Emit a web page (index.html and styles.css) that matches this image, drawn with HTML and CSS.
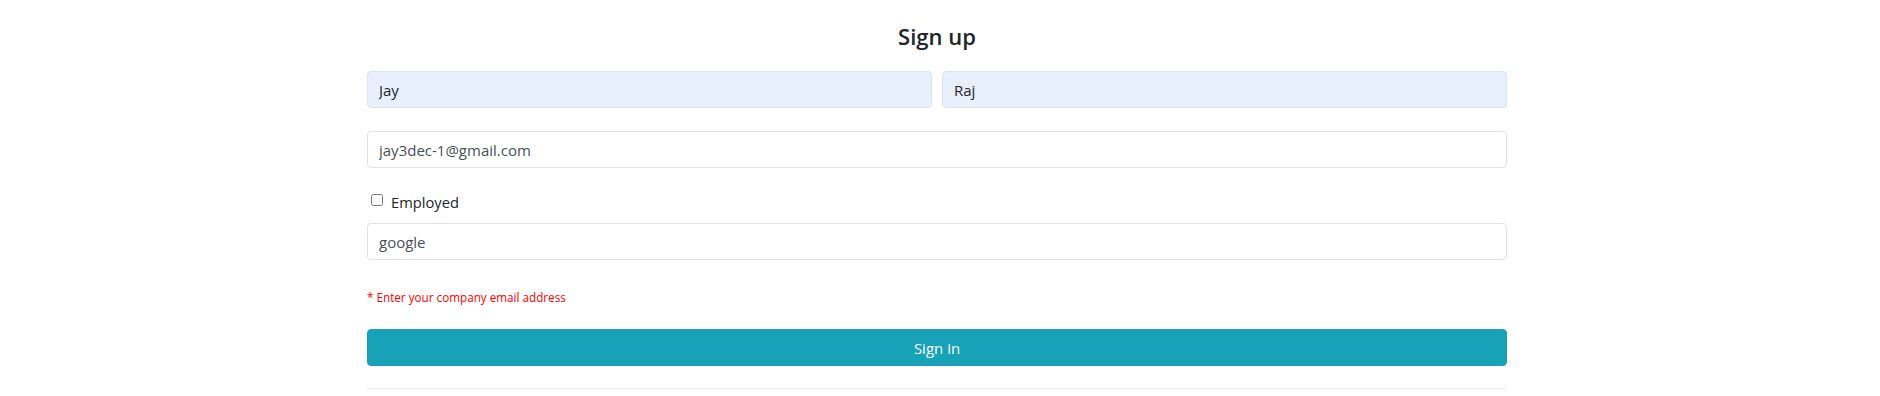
FILE: index.html
```html
<!DOCTYPE html>
<html lang="en">
<head>
<meta charset="utf-8">
<title>Sign up</title>
<link rel="stylesheet" href="styles.css">
</head>
<body>
<main class="container">
  <h2 class="title">Sign up</h2>
  <form class="form">
    <div class="row-2">
      <input class="field field-autofill" type="text" value="Jay">
      <input class="field field-autofill" type="text" value="Raj">
    </div>
    <input class="field field-email" type="email" value="jay3dec-1@gmail.com">
    <label class="check">
      <input class="check-box" type="checkbox">
      <span class="check-label">Employed</span>
    </label>
    <input class="field field-company" type="text" value="google">
    <p class="error">* Enter your company email address</p>
    <button class="btn" type="button">Sign in</button>
  </form>
  <hr class="rule">
</main>
</body>
</html>
```
FILE: styles.css
```css
html, body {
  margin: 0;
  padding: 0;
  background: #ffffff;
}
body {
  padding-right: 6px;
  font-family: "Open Sans", "Noto Sans", sans-serif;
  color: #212529;
}
.container {
  width: 1140px;
  margin: 0 auto;
  padding-top: 22px;
}
.title {
  margin: 0 0 21px;
  font-size: 22px;
  line-height: 28px;
  font-weight: 600;
  text-align: center;
  color: #212529;
}
.form {
  display: flex;
  flex-direction: column;
  margin: 0;
}
.row-2 {
  display: grid;
  grid-template-columns: 1fr 1fr;
  gap: 10px;
}
.field {
  box-sizing: border-box;
  height: 37px;
  width: 100%;
  margin: 0;
  padding: 0 11px;
  font-family: inherit;
  font-size: 15px;
  color: #495057;
  background: #ffffff;
  border: 1px solid #dfe2e6;
  border-radius: 4px;
  outline: none;
}
.field-autofill {
  background: #e8f0fe;
  color: #212529;
  border-color: #dbe3ee;
}
.field-email {
  margin-top: 23px;
}
.check {
  display: flex;
  align-items: center;
  height: 24px;
  margin-top: 22px;
  padding-left: 4px;
}
.check-box {
  width: 12px;
  height: 12px;
  margin: 0 8px 0 0;
  position: relative;
  top: -2px;
}
.check-label {
  font-size: 14.7px;
  line-height: 24px;
  color: #212529;
}
.field-company {
  margin-top: 9px;
}
.error {
  margin: 28px 0 0;
  font-size: 11.7px;
  line-height: 18px;
  color: #ff0000;
}
.btn {
  box-sizing: border-box;
  height: 37px;
  margin-top: 23px;
  width: 100%;
  border: 1px solid #17a2b8;
  border-radius: 4px;
  background: #17a2b8;
  color: #ffffff;
  font-family: inherit;
  font-size: 15px;
}
.rule {
  margin: 22px 0 0;
  border: 0;
  border-top: 1px solid #ededed;
  height: 0;
}
```
